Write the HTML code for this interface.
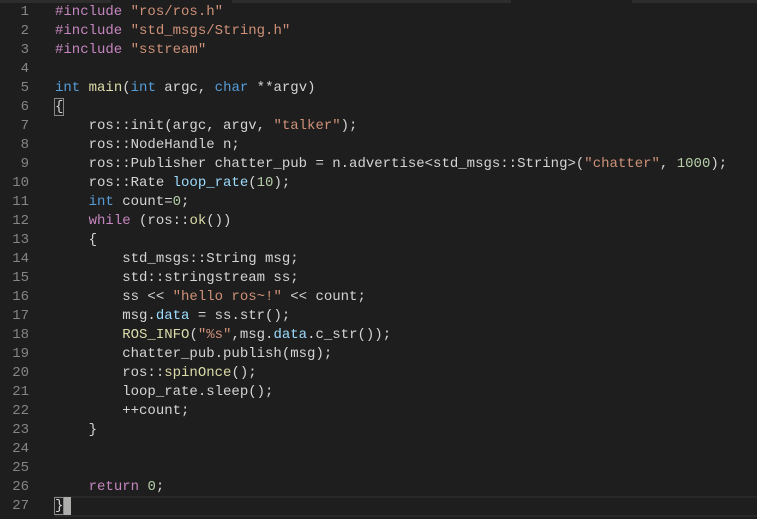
<!DOCTYPE html><html><head><style>
body{margin:0;width:757px;height:519px;background:#1e1e1e;overflow:hidden;position:relative;font-family:"Liberation Mono",monospace;font-size:14px;}
.top{position:absolute;top:0;height:3px;background:#2d2d2d}
.code{position:absolute;left:55px;top:3px;color:#d4d4d4;white-space:pre;line-height:19px}
.nums{position:absolute;left:0;top:3px;line-height:19px;color:#858585;text-align:right;width:29px;white-space:pre}
.p{color:#c586c0}.s{color:#ce9178}.k{color:#569cd6}.f{color:#dcdcaa}.v{color:#9cdcfe}.n{color:#b5cea8}
.cur{position:absolute;left:55px;top:496px;width:702px;height:17px;border-top:2px solid #282828;border-bottom:2px solid #282828}
.brk{outline:1px solid #888;}
.cb{position:absolute;left:63px;top:497px;width:8px;height:18px;background:#aeafad}
</style></head><body>
<div class="top" style="left:0;width:111px"></div><div class="top" style="left:232px;width:525px;"></div><div class="top" style="left:511px;width:121px;background:#1e1e1e"></div>
<div class="cur"></div><div class="cb"></div>
<div class="nums">1
2
3
4
5
6
7
8
9
10
11
12
13
14
15
16
17
18
19
20
21
22
23
24
25
26
27</div>
<div class="code"><span class="p">#include</span> <span class="s">"ros/ros.h"</span>
<span class="p">#include</span> <span class="s">"std_msgs/String.h"</span>
<span class="p">#include</span> <span class="s">"sstream"</span>

<span class="k">int</span> <span class="f">main</span>(<span class="k">int</span> argc, <span class="k">char</span> **argv)
<span class="brk">{</span>
    ros::init(argc, argv, <span class="s">"talker"</span>);
    ros::NodeHandle n;
    ros::Publisher chatter_pub = n.advertise&lt;std_msgs::String&gt;(<span class="s">"chatter"</span>, <span class="n">1000</span>);
    ros::Rate <span class="v">loop_rate</span>(<span class="n">10</span>);
    <span class="k">int</span> count=<span class="n">0</span>;
    <span class="p">while</span> (ros::<span class="f">ok</span>())
    {
        std_msgs::String msg;
        std::stringstream ss;
        ss &lt;&lt; <span class="s">"hello ros~!"</span> &lt;&lt; count;
        msg.<span class="v">data</span> = ss.str();
        <span class="f">ROS_INFO</span>(<span class="s">"%s"</span>,msg.<span class="v">data</span>.c_str());
        chatter_pub.publish(msg);
        ros::<span class="f">spinOnce</span>();
        loop_rate.sleep();
        ++count;
    }


    <span class="p">return</span> <span class="n">0</span>;
<span class="brk">}</span></div>
</body></html>
